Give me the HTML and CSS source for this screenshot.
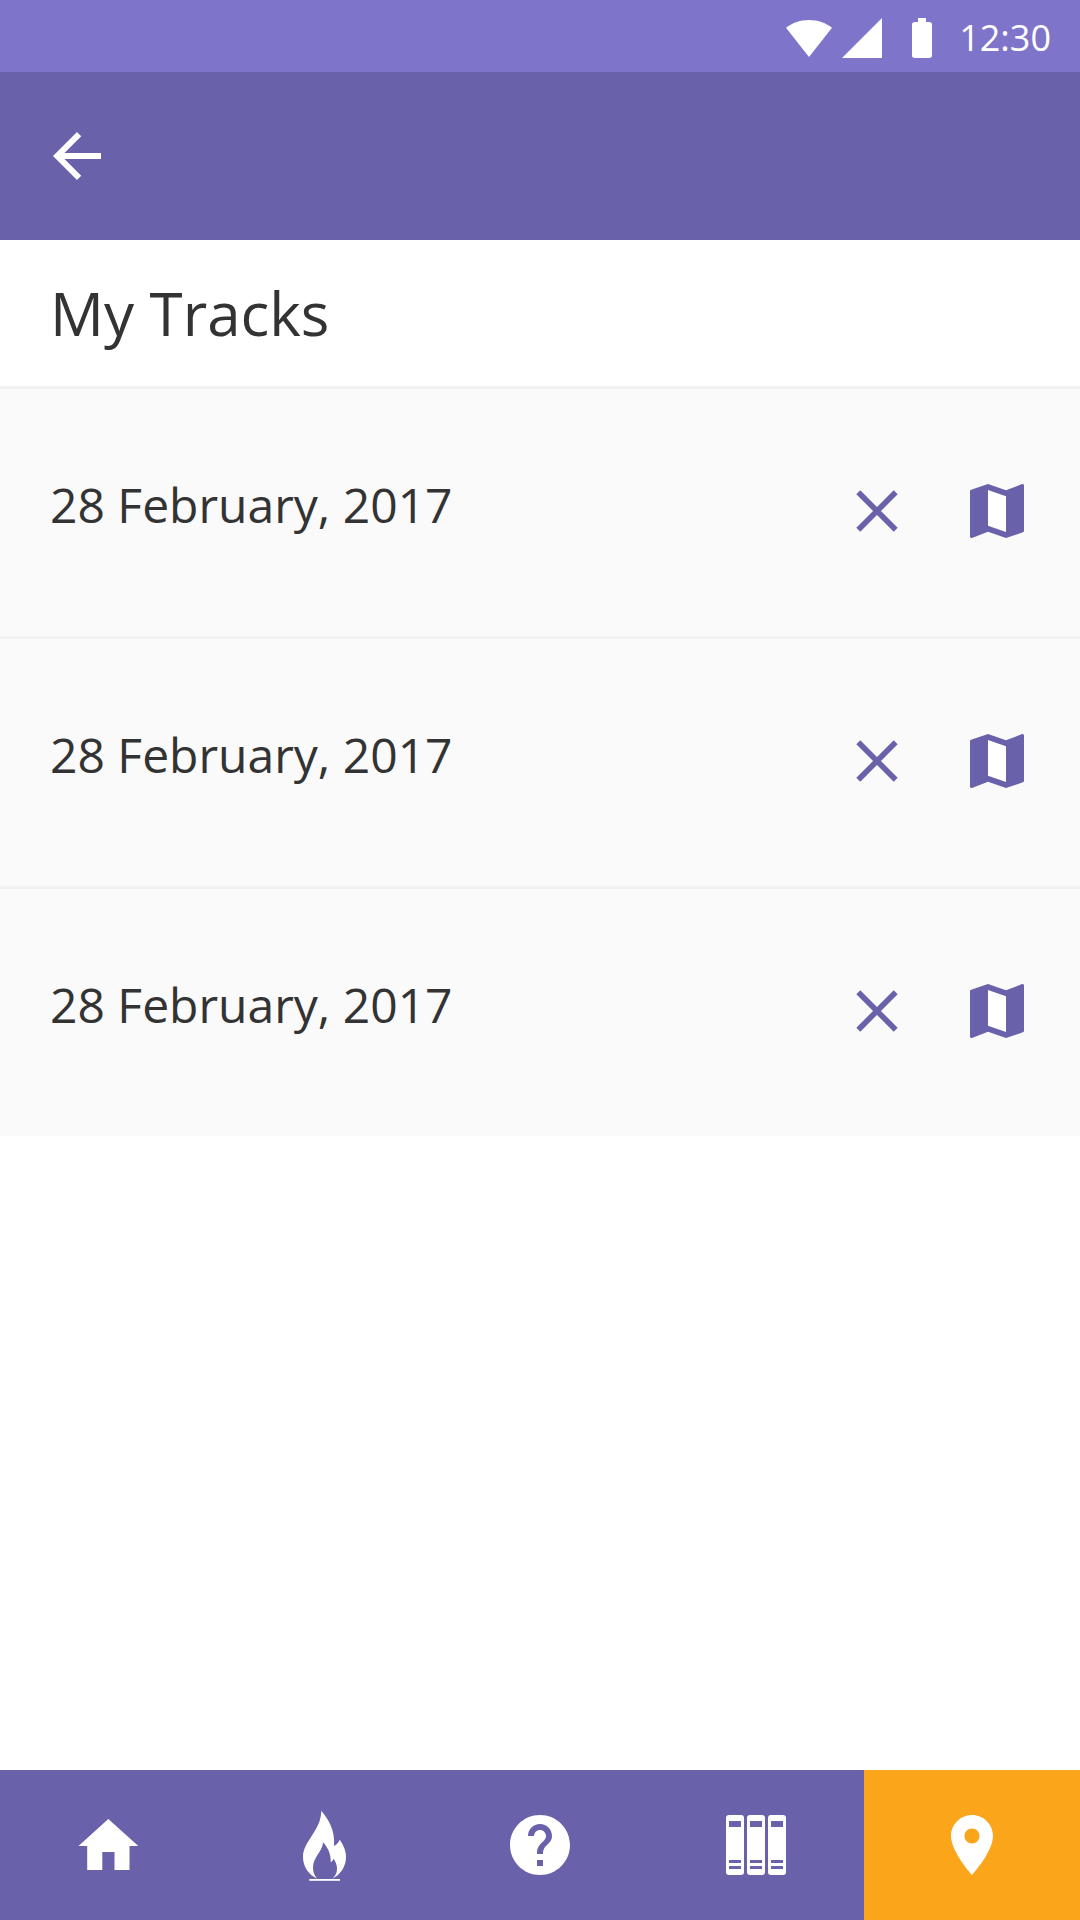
FILE: index.html
```html
<!DOCTYPE html>
<html lang="en">
<head>
<meta charset="utf-8">
<meta name="viewport" content="width=device-width, initial-scale=1">
<title>My Tracks</title>
<link rel="stylesheet" href="styles.css">
</head>
<body>
<svg class="sprite" aria-hidden="true">
  <symbol id="close" viewBox="0 0 72 72"><path d="M17.3 17.3 54.7 54.7M54.7 17.3 17.3 54.7" fill="none" stroke="currentColor" stroke-width="5.6"/></symbol>
  <symbol id="map" viewBox="0 0 24 24"><path fill="currentColor" fill-rule="evenodd" d="M20.5 3l-.16.03L15 5.1 9 3 3.36 4.900c-.21.07-.36.25-.36.480V20.500c0 .28.22.5.5.5l.16-.03L9 18.900l6 2.100 5.640-1.900c.21-.07.36-.25.36-.480V3.500c0-.28-.22-.5-.5-.5z"/><path fill="#fff" d="M9 5l6 2.100V19l-6-2.110V5z"/></symbol>
</svg>
<div class="screen">
  <div class="status-bar">
    <div class="signals">
      <svg width="46" height="40" viewBox="0 0 46 40" aria-hidden="true"><path fill="currentColor" d="M0 9.700C6.500 4.700 14.500 2 23 2s16.500 2.700 23 7.700L23 39z"/></svg>
      <svg width="40" height="40" viewBox="0 0 40 40" aria-hidden="true"><path fill="currentColor" d="M40 0V40H0z"/></svg>
    </div>
    <svg width="20" height="40" viewBox="0 0 20 40" aria-hidden="true"><path fill="currentColor" d="M6 0h8v4h3.300A2.700 2.700 0 0 1 20 6.700V37.300A2.700 2.700 0 0 1 17.300 40H2.700A2.700 2.700 0 0 1 0 37.300V6.700A2.700 2.700 0 0 1 2.700 4H6z"/></svg>
    <time class="clock">12:30</time>
  </div>
  <header class="app-bar">
    <button class="icon-button" type="button" aria-label="Back">
      <svg class="icon" viewBox="0 0 24 24" aria-hidden="true"><path fill="currentColor" d="M20 11H7.830l5.590-5.590L12 4l-8 8 8 8 1.410-1.410L7.830 13H20v-2z"/></svg>
    </button>
  </header>
  <main class="content">
    <h1 class="title">My Tracks</h1>
    <ul class="tracks">
      <li class="track">
        <span class="track-date">28 February, 2017</span>
        <button class="icon-button" type="button" aria-label="Delete track"><svg class="icon" aria-hidden="true"><use href="#close"/></svg></button>
        <button class="icon-button" type="button" aria-label="Show on map"><svg class="icon" aria-hidden="true"><use href="#map"/></svg></button>
      </li>
      <li class="track">
        <span class="track-date">28 February, 2017</span>
        <button class="icon-button" type="button" aria-label="Delete track"><svg class="icon" aria-hidden="true"><use href="#close"/></svg></button>
        <button class="icon-button" type="button" aria-label="Show on map"><svg class="icon" aria-hidden="true"><use href="#map"/></svg></button>
      </li>
      <li class="track">
        <span class="track-date">28 February, 2017</span>
        <button class="icon-button" type="button" aria-label="Delete track"><svg class="icon" aria-hidden="true"><use href="#close"/></svg></button>
        <button class="icon-button" type="button" aria-label="Show on map"><svg class="icon" aria-hidden="true"><use href="#map"/></svg></button>
      </li>
    </ul>
  </main>
  <nav class="tabs" aria-label="Main">
    <a class="tab" href="#home" aria-label="Home">
      <svg class="icon" viewBox="0 0 72 72" aria-hidden="true"><path fill="currentColor" d="M36.300 10 66.300 37H57.500V61H42.500V43H30.300V61H15.200V37H6.500z"/></svg>
    </a>
    <a class="tab" href="#fire" aria-label="Fire">
      <svg class="icon" viewBox="0 0 72 72" aria-hidden="true"><path fill="currentColor" d="M33.300 1.700C40 10 47.500 21 46 37 48.500 36 50.500 33.500 51.700 30.700 55 35.500 58 41 58 48 58 58 52 66 44.300 69.700 47.500 67 49.300 63.500 49 59 48.800 55.500 47.300 52 45.700 49.700 45.200 51.200 44.200 52.500 42.700 53 43.200 45 39.500 38 35 33.300 34.500 43 25 48 25 58.500 25 63 26.500 67 29.300 69.700 21 66 15 58 15 48 15 32 33 22 33.300 1.700z"/><path fill="currentColor" d="M21.300 70H52v1.800H21.300z"/></svg>
    </a>
    <a class="tab" href="#help" aria-label="Help">
      <svg class="icon" viewBox="0 0 24 24" aria-hidden="true"><path fill="currentColor" d="M12 2C6.480 2 2 6.480 2 12s4.480 10 10 10 10-4.480 10-10S17.520 2 12 2zm1 17h-2v-2h2v2zm2.070-7.750l-.9.920C13.450 12.900 13 13.500 13 15h-2v-.5c0-1.100.45-2.100 1.170-2.830l1.240-1.260c.37-.36.590-.860.590-1.410 0-1.100-.9-2-2-2s-2 .9-2 2H8c0-2.210 1.790-4 4-4s4 1.790 4 4c0 .880-.36 1.680-.930 2.250z"/></svg>
    </a>
    <a class="tab" href="#library" aria-label="Library">
      <svg class="icon" viewBox="0 0 72 72" aria-hidden="true"><g fill="currentColor"><rect x="6" y="6" width="18" height="60" rx="3"/><rect x="27" y="6" width="18" height="60" rx="3"/><rect x="48" y="6" width="18" height="60" rx="3"/></g><path fill="#6962ab" d="M9 12h12v6H9zM30 12h12v6H30zM51 12h12v6H51zM9 51h12v3H9zM30 51h12v3H30zM51 51h12v3H51zM9 57h12v3H9zM30 57h12v3H30zM51 57h12v3H51z"/></svg>
    </a>
    <a class="tab tab-active" href="#tracks" aria-label="Tracks" aria-current="page">
      <svg class="icon" viewBox="0 0 24 24" aria-hidden="true"><path fill="currentColor" d="M12 2C8.130 2 5 5.130 5 9c0 5.250 7 13 7 13s7-7.750 7-13c0-3.870-3.130-7-7-7zm0 9.500c-1.380 0-2.500-1.120-2.500-2.500s1.120-2.500 2.500-2.500 2.500 1.120 2.500 2.500-1.120 2.500-2.500 2.500z"/></svg>
    </a>
  </nav>
</div>
</body>
</html>
```
FILE: styles.css
```css
* {
  box-sizing: border-box;
}

body {
  margin: 0;
  background: #fff;
  color: #333;
  font-family: "Open Sans", "Noto Sans", sans-serif;
}

.sprite {
  display: none;
}

.screen {
  display: flex;
  flex-direction: column;
  min-height: 100vh;
}

.status-bar {
  display: flex;
  align-items: center;
  justify-content: flex-end;
  padding: 4px 29px 0 0;
  height: 72px;
  background: #7e75cb;
  color: #fff;
}

.signals {
  display: flex;
  gap: 10px;
  margin-right: 30px;
}

.status-bar svg {
  display: block;
}

.clock {
  margin-left: 27px;
  font-size: 36px;
  line-height: 48px;
}

.app-bar {
  display: flex;
  align-items: center;
  padding: 48px 41px;
  background: #6962ab;
  color: #fff;
}

.icon-button {
  flex: none;
  padding: 0;
  border: 0;
  background: none;
  color: inherit;
  cursor: pointer;
}

.icon {
  display: block;
  width: 72px;
  height: 72px;
}

.content {
  flex: 1;
}

.title {
  margin: 0;
  padding: 32px 50px;
  border-bottom: 3px solid #f1f1f1;
  font-size: 60px;
  font-weight: 400;
  line-height: 82px;
}

.tracks {
  margin: 0;
  padding: 0;
  list-style: none;
}

.track {
  display: flex;
  align-items: flex-start;
  gap: 48px;
  padding: 86px 47px 89px 50px;
  background: #fafafa;
  color: #6962ab;
}

.track + .track {
  border-top: 3px solid #f1f1f1;
}

.track-date {
  flex: 1;
  color: #333;
  font-size: 48px;
  line-height: 60px;
}

.tabs {
  display: grid;
  grid-template-columns: repeat(5, 1fr);
  background: #6962ab;
}

.tab {
  display: flex;
  justify-content: center;
  padding: 39px 0;
  color: #fff;
}

.tab-active {
  background: #fba51a;
}
```
